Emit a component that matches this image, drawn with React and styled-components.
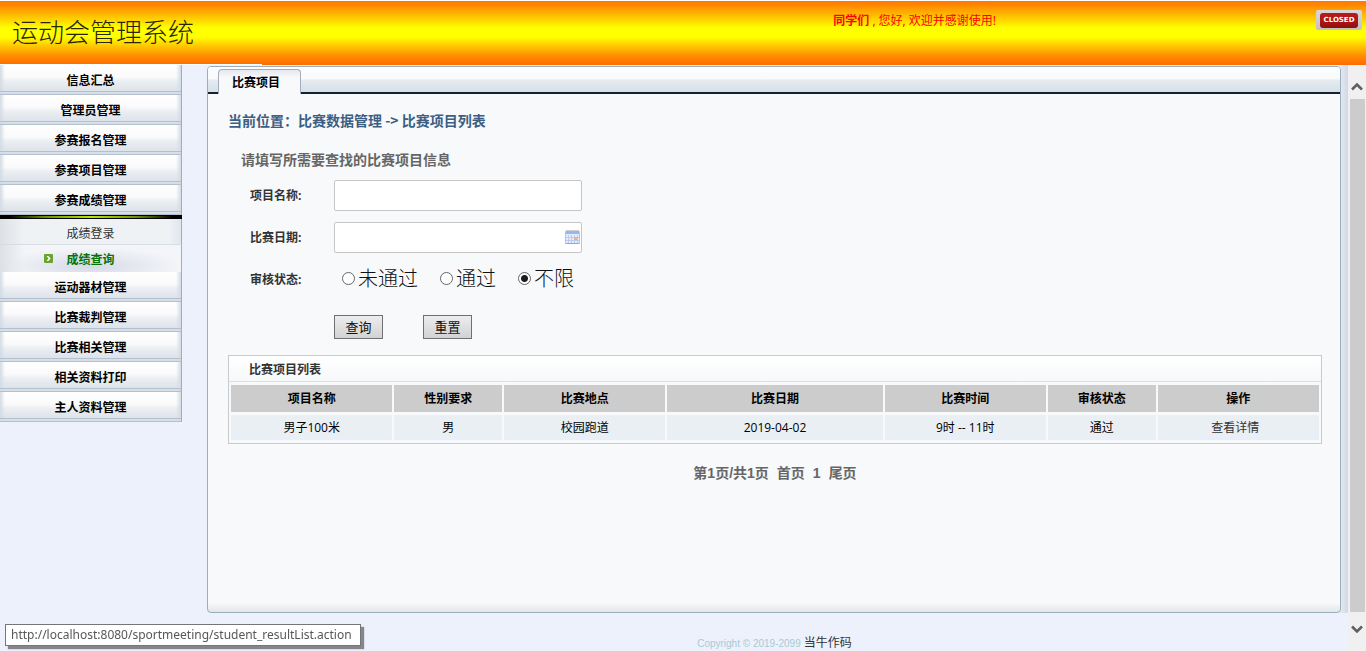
import React, { useState } from 'react';
import styled, { createGlobalStyle, css } from 'styled-components';

const cjk = '"Noto Sans CJK SC", sans-serif';

const GlobalStyle = createGlobalStyle`
  *, *::before, *::after { box-sizing: border-box; }
  body {
    margin: 0;
    background: #edf1fb;
    color: #000;
    font: 12px/18px "Open Sans", ${cjk};
  }
  a { color: inherit; text-decoration: none; }
  h1, h2, p, ul { margin: 0; padding: 0; }
  ul { list-style: none; }
  button, input { font: inherit; }
`;

const Page = styled.div`
  min-height: 100vh;
  display: flex;
  flex-direction: column;
`;

const Header = styled.header`
  height: 65px;
  flex: none;
  display: flex;
  justify-content: space-between;
  border-top: 1px solid #fff;
  background: linear-gradient(#ff7800 0, #ff8c00 8%, #ffff00 42%, #ffff00 56%, #ff8c00 86%, #ff6a00 100%);
`;

const Logo = styled.h1`
  width: 262px;
  padding: 8px 12px;
  border-bottom: 1px solid #fff;
  color: #2b2600;
  font: 300 26px/44px KaiTi, STKaiti, ${cjk};
  white-space: nowrap;
`;

const HeaderRight = styled.div`
  width: 39%;
  display: flex;
  justify-content: space-between;
  align-items: flex-start;
  padding: 9px 4px 0 0;
`;

const Greeting = styled.p`
  padding-top: 1px;
  line-height: 20px;
  color: #f00;
`;

const CloseButton = styled.button`
  width: 46px;
  height: 20px;
  padding: 2px 4px;
  border: 0;
  border-radius: 2px;
  background: linear-gradient(#d9d9d9, #c4c0c0);
  cursor: pointer;

  span {
    display: block;
    height: 15px;
    border-radius: 3px;
    background: linear-gradient(#b81c1c, #b01616 50%, #8e0e0e);
    color: #fff;
    font: bold 7px/15px "DejaVu Sans", sans-serif;
  }
`;

const Body = styled.div`
  flex: 1;
  display: flex;
`;

const Sidebar = styled.nav`
  width: 182px;
  margin-right: 25px;
  flex: none;
`;

const MenuItem = styled.a`
  display: block;
  height: 30px;
  border: solid #b3c0cf;
  border-width: 0 1px 1px 0;
  border-right-color: #9fadbd;
  background:
    linear-gradient(#b3c0cf, #b3c0cf) 0 26px / 100% 1px no-repeat,
    linear-gradient(90deg, #d3dbe4 0, transparent 5px, transparent calc(100% - 5px), #d3dbe4 100%),
    linear-gradient(#fff 0, #fafafb 12px, #eceff3 16px, #dde3ea 26px, #d3dae2 30px);
  color: #000;
  font-weight: bold;
  line-height: 32px;
  text-align: center;
`;

const SubMenu = styled.ul`
  &::before {
    content: "";
    display: block;
    height: 4px;
    background:
      linear-gradient(90deg, transparent 5%, #6f9000 25%, #b5e800 50%, #6f9000 75%, transparent 95%) 0 1px / 100% 2px no-repeat,
      #000;
  }
`;

const SubItem = styled.li`
  height: 26px;
  border-bottom: 1px solid #d8dde3;
  border-right: 1px solid #9fadbd;
  background: linear-gradient(90deg, #dde0e4 0, #eff2f5 24px, #eff2f5 calc(100% - 12px), #dfe6ee 100%);
  line-height: 29px;
  text-align: center;

  & + & { height: 27px; }

  a {
    position: relative;
    color: #333;
  }

  ${({ $active }) => $active && css`
    border-bottom: 0;
    background:
      linear-gradient(90deg, #dde0e4 0, transparent 24px),
      radial-gradient(ellipse 50% 70% at 50% 80%, #d6dae7, transparent),
      #f3f5f8;
    font-weight: bold;
    a { color: #067206; }
  `}
`;

const Marker = styled.svg`
  position: absolute;
  left: -22px;
  top: 3px;
`;

const Main = styled.div`
  flex: 1;
  min-width: 0;
  display: flex;
  flex-direction: column;
`;

const PanelRow = styled.div`
  flex: 1;
  display: flex;
  padding-right: 7px;
  background: linear-gradient(90deg, #e4e9f4, #d3d8e6) right / 8px 100% no-repeat;
`;

const Panel = styled.section`
  flex: 1;
  min-width: 0;
  margin-top: 1px;
  border: 1px solid #9aaebb;
  border-radius: 4px;
  overflow: hidden;
  background:
    linear-gradient(#f9fafb, #e3e7ea) bottom / 100% 10px no-repeat,
    #f7f9fb;
`;

const TabBar = styled.div`
  height: 27px;
  display: flex;
  align-items: flex-end;
  padding-left: 10px;
  border-bottom: 2px solid #142332;
  background: linear-gradient(#fcfefe 0, #f7fafb 12px, #e6ecf0 13px, #d3dfe8 26px);
`;

const Tab = styled.h2`
  width: 83px;
  height: 25px;
  margin-bottom: -2px;
  border: 1px solid #a4adb9;
  border-bottom: 0;
  border-radius: 4px 4px 0 0;
  background: linear-gradient(#e6e8ee, #f7f9fb 8px);
  font-size: 12px;
  line-height: 26px;
  text-indent: 13px;
`;

const Content = styled.div`
  padding: 16px 18px 0 20px;
`;

const Breadcrumb = styled.p`
  color: #3c5f83;
  font: bold 14px/20px ${cjk};
`;

const Form = styled.form`
  padding: 19px 0 0 22px;
`;

const Legend = styled.p`
  margin: 0 0 11px -9px;
  color: #666;
  font: bold 14px/20px ${cjk};
`;

const Field = styled.div`
  height: 31px;
  margin-bottom: 11px;
  display: flex;
  align-items: center;
`;

const fieldLabel = css`
  width: 84px;
  flex: none;
  color: #333;
  font-weight: bold;
`;
const Label = styled.label`${fieldLabel}`;
const GroupLabel = styled.span`${fieldLabel}`;

const InputWrap = styled.div`
  width: 248px;
  position: relative;
`;

const Input = styled.input`
  display: block;
  width: 100%;
  height: 31px;
  padding: 0 6px;
  border: 1px solid #c6c6c6;
  border-radius: 2px;
  background: #fff;
`;

const Calendar = styled.svg`
  position: absolute;
  right: 2px;
  top: 8px;
`;

const Radios = styled.div`
  display: flex;
  gap: 22px;
  padding-left: 8px;
`;

const RadioLabel = styled.label`
  display: flex;
  align-items: center;
  gap: 3px;
  margin-top: -4px;
  color: #111;
  font: 300 20px/24px SimSun, ${cjk};
`;

const Radio = styled.input`
  appearance: none;
  width: 13px;
  height: 13px;
  margin: 2px 0 0;
  border: 1px solid #666;
  border-radius: 50%;
  background: #fff;

  &:checked {
    background: radial-gradient(circle, #1c1c1c 3px, #fff 4px);
  }
`;

const Buttons = styled.div`
  display: flex;
  gap: 40px;
  margin: 20px 0 16px;
  padding-left: 84px;
`;

const Button = styled.button`
  width: 49px;
  height: 24px;
  padding: 0;
  border: 1px solid #707070;
  background: linear-gradient(#ededed, #d2d2d2);
  color: #111;
  font-size: 13px;
  line-height: 22px;
`;

const ListBox = styled.div`
  border: 1px solid #c8cbce;
`;

const ListTitle = styled.h2`
  height: 26px;
  padding-left: 20px;
  border-bottom: 1px solid #dae2e6;
  background: linear-gradient(#fff, #f6f8fa);
  color: #333;
  font-size: 12px;
  line-height: 28px;
`;

const Table = styled.table`
  width: 100%;
  border-collapse: separate;
  border-spacing: 2px 3px;
  table-layout: fixed;
`;

const Th = styled.th`
  width: ${({ $width }) => $width};
  height: 27px;
  padding: 0;
  background: #ccc;
`;

const Td = styled.td`
  height: 25px;
  padding: 0;
  background: linear-gradient(#eaeff3 70%, #e9effa);
  text-align: center;

  a { color: #333; padding-right: 6px; }
`;

const Pager = styled.div`
  display: flex;
  justify-content: center;
  gap: 8px;
  padding-top: 19px;
  color: #666;
  font: bold 14px/20px "Liberation Sans", ${cjk};
`;

const Footer = styled.footer`
  height: 38px;
  padding: 22px 6px 0 0;
  color: #333;
  line-height: 16px;
  text-align: center;
  white-space: nowrap;

  small {
    color: #a9c9d5;
    font: 10px "Liberation Sans", sans-serif;
  }
`;

const ScrollBar = styled.div`
  width: 18px;
  flex: none;
  display: flex;
  flex-direction: column;
  align-items: center;
  background: #f0f0f0;
`;

const ScrollArrow = styled.svg`
  flex: none;
  margin: ${({ $down }) => ($down ? '13px 0 17px' : '17px 0 8px')};
`;

const Thumb = styled.div`
  width: 15px;
  flex: 1;
  background: #ccc;
`;

const StatusTip = styled.div`
  position: fixed;
  left: 5px;
  bottom: 5px;
  padding: 0 8px 0 5px;
  border: 1px solid #767676;
  background: #fff;
  box-shadow: 3px 3px 1px #85858a;
  color: #575757;
  font: 12px/20px "Noto Sans", sans-serif;
`;

const menuTop = ['信息汇总', '管理员管理', '参赛报名管理', '参赛项目管理', '参赛成绩管理'];
const menuBottom = ['运动器材管理', '比赛裁判管理', '比赛相关管理', '相关资料打印', '主人资料管理'];
const columns = [
  ['项目名称', '15%'],
  ['性别要求', '10%'],
  ['比赛地点', '15%'],
  ['比赛日期', '20%'],
  ['比赛时间', '15%'],
  ['审核状态', '10%'],
  ['操作', '15%'],
];
const rows = [['男子100米', '男', '校园跑道', '2019-04-02', '9时 -- 11时', '通过']];
const statuses = ['未通过', '通过', '不限'];

const Menu = ({ items }) => items.map((t) => <MenuItem href="#" key={t}>{t}</MenuItem>);

export default function App() {
  const [status, setStatus] = useState('不限');

  return (
    <Page>
      <GlobalStyle />
      <Header>
        <Logo>运动会管理系统</Logo>
        <HeaderRight>
          <Greeting><b>同学们</b> , 您好, 欢迎并感谢使用!</Greeting>
          <CloseButton type="button"><span>CLOSED</span></CloseButton>
        </HeaderRight>
      </Header>

      <Body>
        <Sidebar>
          <Menu items={menuTop} />
          <SubMenu>
            <SubItem><a href="#">成绩登录</a></SubItem>
            <SubItem $active>
              <a href="#">
                <Marker width="9" height="9" viewBox="0 0 9 9" aria-hidden="true">
                  <rect width="9" height="9" rx="1" fill="#69a52c" />
                  <path d="M2.500 2h1.800l2.400 2.500L4.300 7H2.500l2-2.500z" fill="#fff" />
                </Marker>
                成绩查询
              </a>
            </SubItem>
          </SubMenu>
          <Menu items={menuBottom} />
        </Sidebar>

        <Main>
          <PanelRow>
            <Panel>
              <TabBar><Tab>比赛项目</Tab></TabBar>
              <Content>
                <Breadcrumb>当前位置：比赛数据管理 -&gt; 比赛项目列表</Breadcrumb>
                <Form onSubmit={(e) => e.preventDefault()}>
                  <Legend>请填写所需要查找的比赛项目信息</Legend>
                  <Field>
                    <Label htmlFor="name">项目名称:</Label>
                    <InputWrap><Input id="name" type="text" /></InputWrap>
                  </Field>
                  <Field>
                    <Label htmlFor="date">比赛日期:</Label>
                    <InputWrap>
                      <Input id="date" type="text" />
                      <Calendar width="15" height="14" viewBox="0 0 15 14" aria-hidden="true">
                        <rect x="0.5" y="1" width="14" height="12.5" rx="1" fill="#e4edfb" stroke="#b5c3de" />
                        <path d="M1 1h13v3H1z" fill="#9ab6ee" />
                        <path d="M1 .5h13" stroke="#cfcfcf" />
                        <path d="M3.500 5v8M6.500 5v8M9.500 5v8M12.500 5v8M1 7.500h13M1 10.500h13" stroke="#b9cdf2" />
                        <path d="M9 7h3v3H9z" fill="#eeab98" />
                        <path d="M.5 13.500h14" stroke="#9aa9c8" />
                      </Calendar>
                    </InputWrap>
                  </Field>
                  <Field role="radiogroup" aria-labelledby="status-label">
                    <GroupLabel id="status-label">审核状态:</GroupLabel>
                    <Radios>
                      {statuses.map((s) => (
                        <RadioLabel key={s}>
                          <Radio type="radio" name="status" checked={status === s} onChange={() => setStatus(s)} />
                          {s}
                        </RadioLabel>
                      ))}
                    </Radios>
                  </Field>
                  <Buttons>
                    <Button type="submit">查询</Button>
                    <Button type="reset">重置</Button>
                  </Buttons>
                </Form>

                <ListBox>
                  <ListTitle>比赛项目列表</ListTitle>
                  <Table>
                    <thead>
                      <tr>{columns.map(([name, width]) => <Th key={name} $width={width}>{name}</Th>)}</tr>
                    </thead>
                    <tbody>
                      {rows.map((row) => (
                        <tr key={row[0]}>
                          {row.map((cell) => <Td key={cell}>{cell}</Td>)}
                          <Td><a href="#">查看详情</a></Td>
                        </tr>
                      ))}
                    </tbody>
                  </Table>
                </ListBox>
                <Pager>
                  <span>第1页/共1页</span>
                  <a href="#">首页</a>
                  <a href="#">1</a>
                  <a href="#">尾页</a>
                </Pager>
              </Content>
            </Panel>
          </PanelRow>
          <Footer><small>Copyright © 2019-2099</small> 当牛作码</Footer>
        </Main>

        <ScrollBar aria-hidden="true">
          <ScrollArrow width="12" height="9" viewBox="0 0 12 9">
            <path d="M1 7.500l5-5 5 5" fill="none" stroke="#606060" strokeWidth="2.600" />
          </ScrollArrow>
          <Thumb />
          <ScrollArrow $down width="12" height="9" viewBox="0 0 12 9">
            <path d="M1 1.500l5 5 5-5" fill="none" stroke="#606060" strokeWidth="2.600" />
          </ScrollArrow>
        </ScrollBar>
      </Body>
      <StatusTip>http://localhost:8080/sportmeeting/student_resultList.action</StatusTip>
    </Page>
  );
}
